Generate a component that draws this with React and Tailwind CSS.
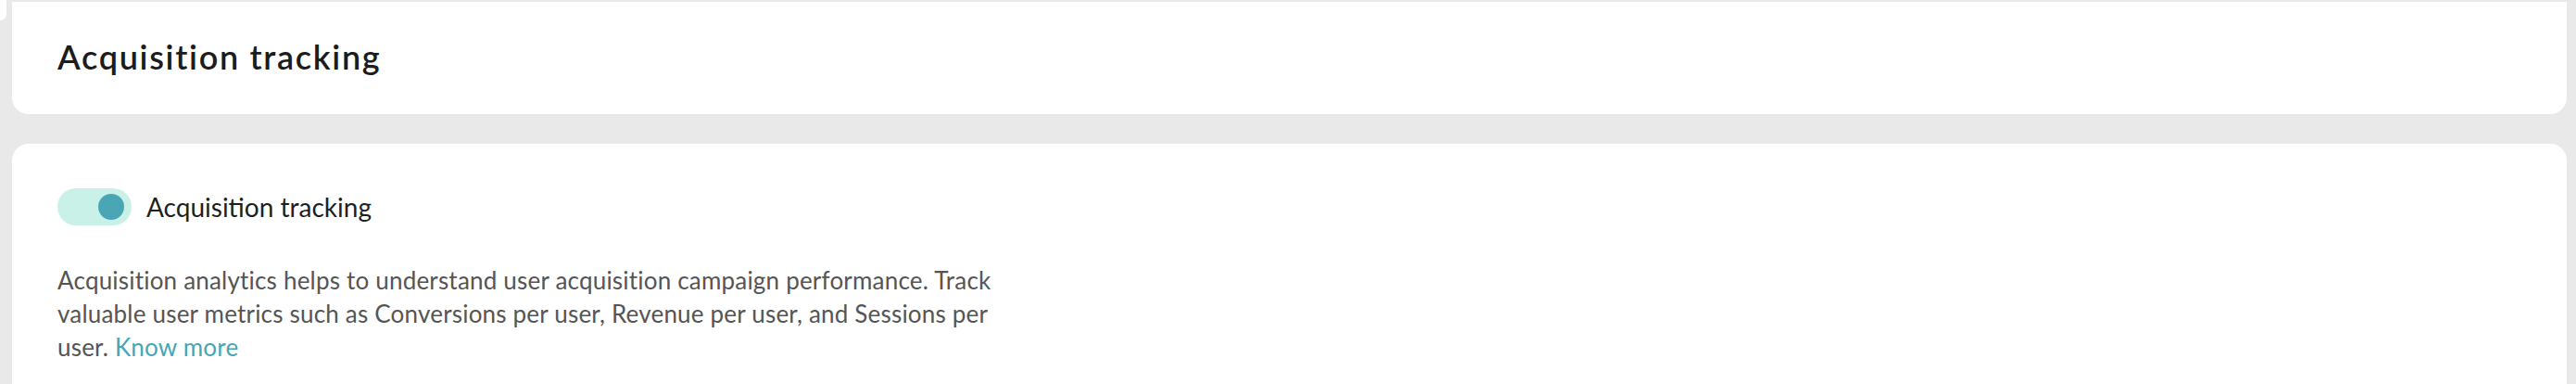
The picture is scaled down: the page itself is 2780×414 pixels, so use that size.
import React from "react";

export default function App() {
  return (
    <div
      className="relative flex h-[414px] w-full flex-col overflow-hidden bg-[#e9e9e9] pl-[13px] pr-[10px] pt-[2px]"
      style={{ fontFamily: "Lato, 'Open Sans', sans-serif" }}
    >
      <div className="absolute left-0 top-0 h-[22px] w-[7px] rounded-br-[8px] bg-white" />
      <div className="flex h-[121px] shrink-0 items-center rounded-b-[18px] bg-white pl-[49px]">
        <h1 className="-mt-[4px] text-[36px] font-semibold leading-[44px] tracking-[1.7px] text-[#1c1c1c]">
          Acquisition tracking
        </h1>
      </div>
      <div className="mt-[32px] flex-1 rounded-t-[18px] bg-white pl-[49px] pt-[48px]">
        <div className="flex items-center gap-[16px]">
          <div className="flex h-[40px] w-[80px] items-center justify-end rounded-full bg-[#c9f1e8] pr-[8px]">
            <div className="h-[28px] w-[28px] rounded-full bg-[#4aa5b5]" />
          </div>
          <span className="text-[28px] leading-[36px] text-[#1f1f1f]">Acquisition tracking</span>
        </div>
        <p className="mt-[41px] max-w-[1040px] text-[26px] leading-[36px] tracking-[0.2px] text-[#555555]">
          Acquisition analytics helps to understand user acquisition campaign performance. Track
          valuable user metrics such as Conversions per user, Revenue per user, and Sessions per
          user. <span className="text-[#46a6b5]">Know more</span>
        </p>
      </div>
    </div>
  );
}
